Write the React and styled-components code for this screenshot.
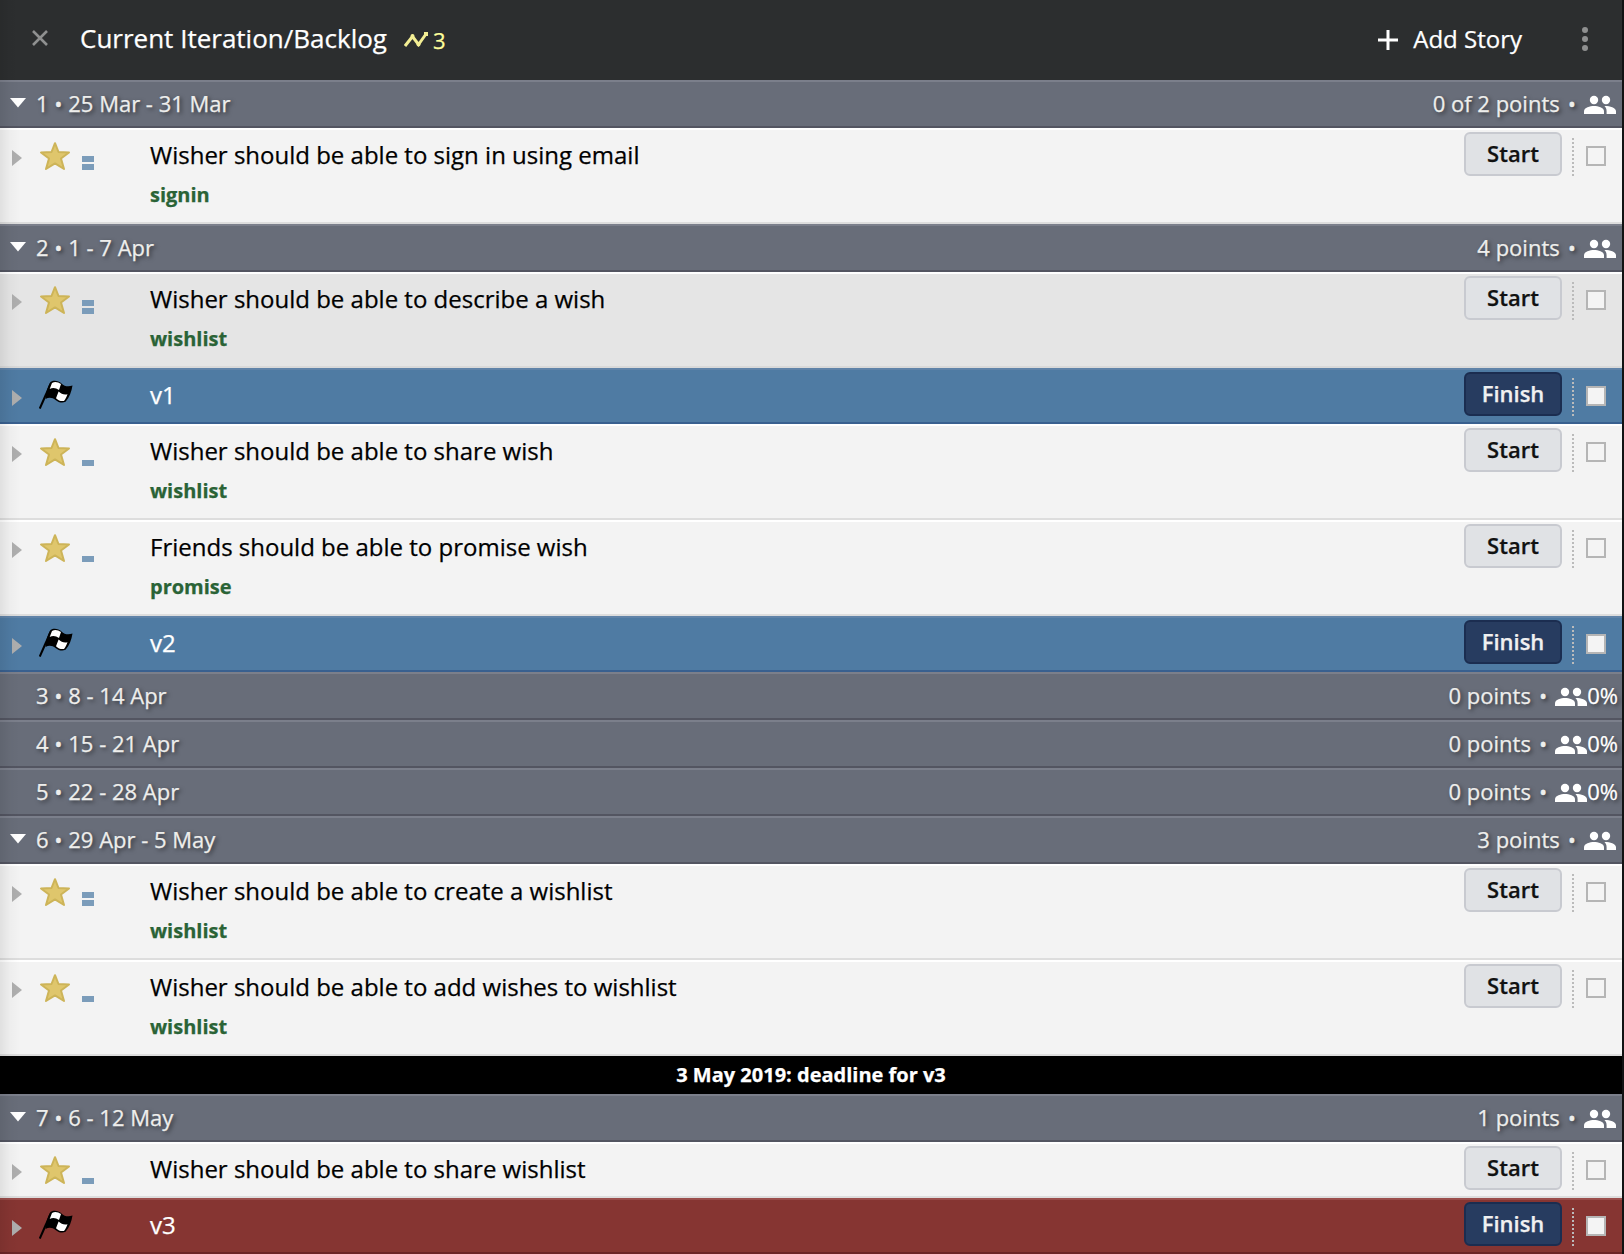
import React from "react";
import styled, { createGlobalStyle } from "styled-components";

const Global = createGlobalStyle`
  * { box-sizing: border-box; }
  html, body { margin: 0; padding: 0; background: #111213; }
  body {
    font-family: "Open Sans", "Noto Sans", sans-serif;
    -webkit-text-stroke: 0.25px currentColor;
    overflow: hidden;
  }
`;

const Panel = styled.main`
  position: relative;
  width: 1622px;
  height: 1254px;
  display: flex;
  flex-direction: column;
  overflow: hidden;
  &::after {
    content: "";
    position: absolute;
    inset: 0 auto 0 0;
    width: 20px;
    background: linear-gradient(to right, rgba(0, 0, 0, 0.08), rgba(0, 0, 0, 0.025) 50%, rgba(0, 0, 0, 0));
    pointer-events: none;
  }
`;

const Header = styled.header`
  display: flex;
  align-items: center;
  flex: none;
  height: 80px;
  padding: 0 34px 4px 32px;
  background: #2c2e2f;
  color: #fff;
`;

const Title = styled.h1`
  margin: 0 0 0 32px;
  font: inherit;
  font-size: 26px;
  line-height: 36px;
`;

const Velocity = styled.div`
  display: flex;
  align-items: center;
  gap: 5px;
  flex: 1;
  margin: 4px 0 0 17px;
  color: #ffff9b;
  font-size: 22px;
  line-height: 30px;
`;

const AddStory = styled.button`
  display: flex;
  align-items: center;
  gap: 15px;
  border: 0;
  padding: 2px 0 0;
  margin-right: 60px;
  background: none;
  color: #fff;
  font: inherit;
  font-size: 24px;
  line-height: 36px;
  -webkit-text-stroke: inherit;

  svg { margin-top: 2px; }
`;

const More = styled.span`
  display: flex;
  margin-top: 2px;
`;

const IterationBar = styled.div`
  display: flex;
  align-items: center;
  flex: none;
  height: 48px;
  padding: 0 ${(p) => (p.$strength ? 4 : 6)}px 2px 10px;
  border-top: 2px solid #7b7f8b;
  border-bottom: 2px solid #535561;
  background: #686d79;
  color: #eeeeec;
  font-size: 22px;
  line-height: 30px;
  text-shadow: 2px 2px 4px rgba(0, 0, 0, 0.55);
`;

const Toggle = styled.span`
  display: flex;
  width: 26px;
  height: 14px;
  margin-top: 4px;
`;

const Dates = styled.span`
  flex: 1;
`;

const Points = styled.span`
  display: flex;
  align-items: center;

  svg { margin-top: 4px; }
`;

const Dot = styled.span`
  margin: 0 8px;
`;

const Strength = styled.span`
  color: #fff;
`;

const tones = {
  story: { bg: "#f3f3f3", top: "#ffffff", bottom: "#dddddd", text: "#000" },
  hover: { bg: "#e5e5e5", top: "#ffffff", bottom: "#d9d9d9", text: "#000" },
  release: { bg: "#4f7ba3", top: "#6083a8", bottom: "#39608f", text: "#fff" },
  late: { bg: "#863532", top: "#9a4d4b", bottom: "#6c2426", text: "#fff" },
};

const Row = styled.article`
  display: flex;
  align-items: flex-start;
  flex: none;
  height: ${(p) => (p.$tall ? 96 : 56)}px;
  padding: 0 16px 0 12px;
  border-top: 2px solid ${(p) => tones[p.$tone].top};
  border-bottom: 2px solid ${(p) => tones[p.$tone].bottom};
  background: ${(p) => tones[p.$tone].bg};
  color: ${(p) => tones[p.$tone].text};
`;

const Expander = styled.span`
  display: flex;
  width: 27px;
  margin-top: 20px;
`;

const TypeIcon = styled.span`
  display: flex;
  width: 43px;
  height: 32px;
  margin-top: 10px;
`;

const Estimate = styled.span`
  display: flex;
  flex-direction: column;
  justify-content: flex-end;
  gap: 2px;
  width: 12px;
  height: 40px;
  margin-right: 56px;
`;

const Bar = styled.i`
  height: 6px;
  background: #7b9cba;
`;

const Body = styled.div`
  flex: 1;
  padding-top: 8px;
`;

const Name = styled.div`
  font-size: 24px;
  line-height: 34px;
`;

const Label = styled.a`
  display: block;
  margin-top: 9px;
  color: #2a6336;
  font-size: 20px;
  font-weight: 700;
  line-height: 28px;
`;

const Action = styled.button`
  flex: none;
  width: 98px;
  height: 44px;
  margin-top: 2px;
  padding: 0 0 2px;
  border: 2px solid ${(p) => (p.$dark ? "#1b2d50" : "#c8cad0")};
  border-radius: 6px;
  background: ${(p) => (p.$dark ? "#273c60" : "#e0e2e5")};
  color: ${(p) => (p.$dark ? "#f0f0f0" : "#111")};
  font: inherit;
  font-size: 22px;
  font-weight: 600;
  line-height: 30px;
  -webkit-text-stroke: inherit;
`;

const Separator = styled.span`
  flex: none;
  width: 2px;
  height: 38px;
  margin: 8px 12px 0 10px;
  background: repeating-linear-gradient(to bottom, #bbb 0 2px, transparent 2px 4px);
`;

const Check = styled.span`
  flex: none;
  width: 20px;
  height: 20px;
  margin-top: 16px;
  border: 2px solid #b5b5b5;
  background: #f4f4f4;
`;

const Deadline = styled.div`
  flex: none;
  height: 38px;
  background: #000;
  color: #fff;
  font-size: 20px;
  font-weight: 700;
  line-height: 38px;
  text-align: center;
`;

const CloseIcon = () => (
  <svg width="16" height="16" viewBox="0 0 16 16">
    <path d="M1 1L15 15M15 1L1 15" stroke="#8f9090" strokeWidth="2.6" />
  </svg>
);

const VelocityIcon = () => (
  <svg width="24" height="16" viewBox="0 0 24 16">
    <path d="M1 14L8.5 4.5L14.5 12.5L22 2" fill="none" stroke="#f3ee94" strokeWidth="3" />
    <g fill="#f3ee94">
      <circle cx="8.5" cy="4" r="2" />
      <circle cx="14.5" cy="12.5" r="2" />
      <rect x="20" y="0" width="4" height="4" />
    </g>
  </svg>
);

const PlusIcon = () => (
  <svg width="20" height="20" viewBox="0 0 20 20">
    <path d="M10 0V20M0 10H20" stroke="#fff" strokeWidth="3" />
  </svg>
);

const MoreIcon = () => (
  <svg width="6" height="24" viewBox="0 0 6 24" fill="#8f9090">
    <circle cx="3" cy="3" r="3" />
    <circle cx="3" cy="12" r="3" />
    <circle cx="3" cy="21" r="3" />
  </svg>
);

const PeopleIcon = () => (
  <svg width="32" height="20" viewBox="0 0 32 20" fill="#fff">
    <circle cx="10" cy="5" r="4.2" />
    <circle cx="22" cy="5" r="4.2" />
    <path d="M0 19V16.2C0 12.6 6 11 10 11S20 12.6 20 16.2V19Z" />
    <path d="M20.4 11C25 10.8 32 12.5 32 16.2V19H22.6V16.2C22.6 13.8 21.8 12.2 20.4 11Z" />
  </svg>
);

const DownIcon = () => (
  <svg width="16" height="10" viewBox="0 0 16 10">
    <path d="M0 0H16L8 9.5Z" fill="#fff" />
  </svg>
);

const RightIcon = () => (
  <svg width="10" height="16" viewBox="0 0 10 16">
    <path d="M0 0L10 8L0 16Z" fill="#aeaeae" />
  </svg>
);

const StarIcon = () => (
  <svg width="32" height="32" viewBox="0 0 32 32">
    <path
      d="M16 3.200L19.500 12L30 12.500L22 18.500L25 29L16 23.400L7 29L10 18.500L2 12.500L12.500 12Z"
      fill="#dfc66c"
      stroke="#cdb458"
      strokeWidth="2"
      strokeLinejoin="round"
    />
  </svg>
);

const FlagIcon = () => (
  <svg width="36" height="32" viewBox="1 0.5 36 32">
    <path d="M1.8 29L13 3.5" stroke="#000" strokeWidth="2" />
    <path
      d="M12.5 2.5C15.5 .2 20.5 1 23.5 4C26.500 7 30.500 7.500 34.500 6C33.500 12 31.500 18 27.500 22.300C24 24 20.500 22.800 17.500 20.500C14.500 18 11 17.500 7.500 19.500C8 13 9.500 7 12.500 2.500Z"
      fill="#000"
    />
    <path d="M14 3.500C17 1.500 20 2.400 23 4.600L21 10.600C18 8.500 15 8 11.700 9.400Z" fill="#fff" />
    <path d="M20.600 12C23.400 14.600 26 15.400 29.500 14.700C28.700 17.200 27.600 19.400 26 21.400C23 22 20.500 21 18 18.700Z" fill="#fff" />
  </svg>
);

const items = [
  { kind: "iteration", name: "1 • 25 Mar - 31 Mar", points: "0 of 2 points", open: true },
  { kind: "story", name: "Wisher should be able to sign in using email", label: "signin", estimate: 2 },
  { kind: "iteration", name: "2 • 1 - 7 Apr", points: "4 points", open: true },
  { kind: "hover", name: "Wisher should be able to describe a wish", label: "wishlist", estimate: 2 },
  { kind: "release", name: "v1" },
  { kind: "story", name: "Wisher should be able to share wish", label: "wishlist", estimate: 1 },
  { kind: "story", name: "Friends should be able to promise wish", label: "promise", estimate: 1 },
  { kind: "release", name: "v2" },
  { kind: "iteration", name: "3 • 8 - 14 Apr", points: "0 points", strength: "0%" },
  { kind: "iteration", name: "4 • 15 - 21 Apr", points: "0 points", strength: "0%" },
  { kind: "iteration", name: "5 • 22 - 28 Apr", points: "0 points", strength: "0%" },
  { kind: "iteration", name: "6 • 29 Apr - 5 May", points: "3 points", open: true },
  { kind: "story", name: "Wisher should be able to create a wishlist", label: "wishlist", estimate: 2 },
  { kind: "story", name: "Wisher should be able to add wishes to wishlist", label: "wishlist", estimate: 1 },
  { kind: "deadline", name: "3 May 2019: deadline for v3" },
  { kind: "iteration", name: "7 • 6 - 12 May", points: "1 points", open: true },
  { kind: "story", name: "Wisher should be able to share wishlist", estimate: 1 },
  { kind: "late", name: "v3" },
];

const Iteration = ({ name, points, open, strength }) => (
  <IterationBar $strength={Boolean(strength)}>
    <Toggle>{open && <DownIcon />}</Toggle>
    <Dates>{name}</Dates>
    <Points>
      {points}
      <Dot>•</Dot>
      <PeopleIcon />
      {strength && <Strength>{strength}</Strength>}
    </Points>
  </IterationBar>
);

const Story = ({ kind, name, label, estimate = 0 }) => {
  const release = kind === "release" || kind === "late";
  return (
    <Row $tone={kind} $tall={Boolean(label)}>
      <Expander><RightIcon /></Expander>
      <TypeIcon>{release ? <FlagIcon /> : <StarIcon />}</TypeIcon>
      <Estimate>
        {Array.from({ length: estimate }, (_, i) => <Bar key={i} />)}
      </Estimate>
      <Body>
        <Name>{name}</Name>
        {label && <Label>{label}</Label>}
      </Body>
      <Action $dark={release}>{release ? "Finish" : "Start"}</Action>
      <Separator />
      <Check />
    </Row>
  );
};

export default function App() {
  return (
    <>
      <Global />
      <Panel>
        <Header>
          <CloseIcon />
          <Title>Current Iteration/Backlog</Title>
          <Velocity><VelocityIcon />3</Velocity>
          <AddStory><PlusIcon />Add Story</AddStory>
          <More><MoreIcon /></More>
        </Header>
        {items.map((item) => {
          if (item.kind === "iteration") return <Iteration key={item.name} {...item} />;
          if (item.kind === "deadline") return <Deadline key={item.name}>{item.name}</Deadline>;
          return <Story key={item.name} {...item} />;
        })}
      </Panel>
    </>
  );
}
